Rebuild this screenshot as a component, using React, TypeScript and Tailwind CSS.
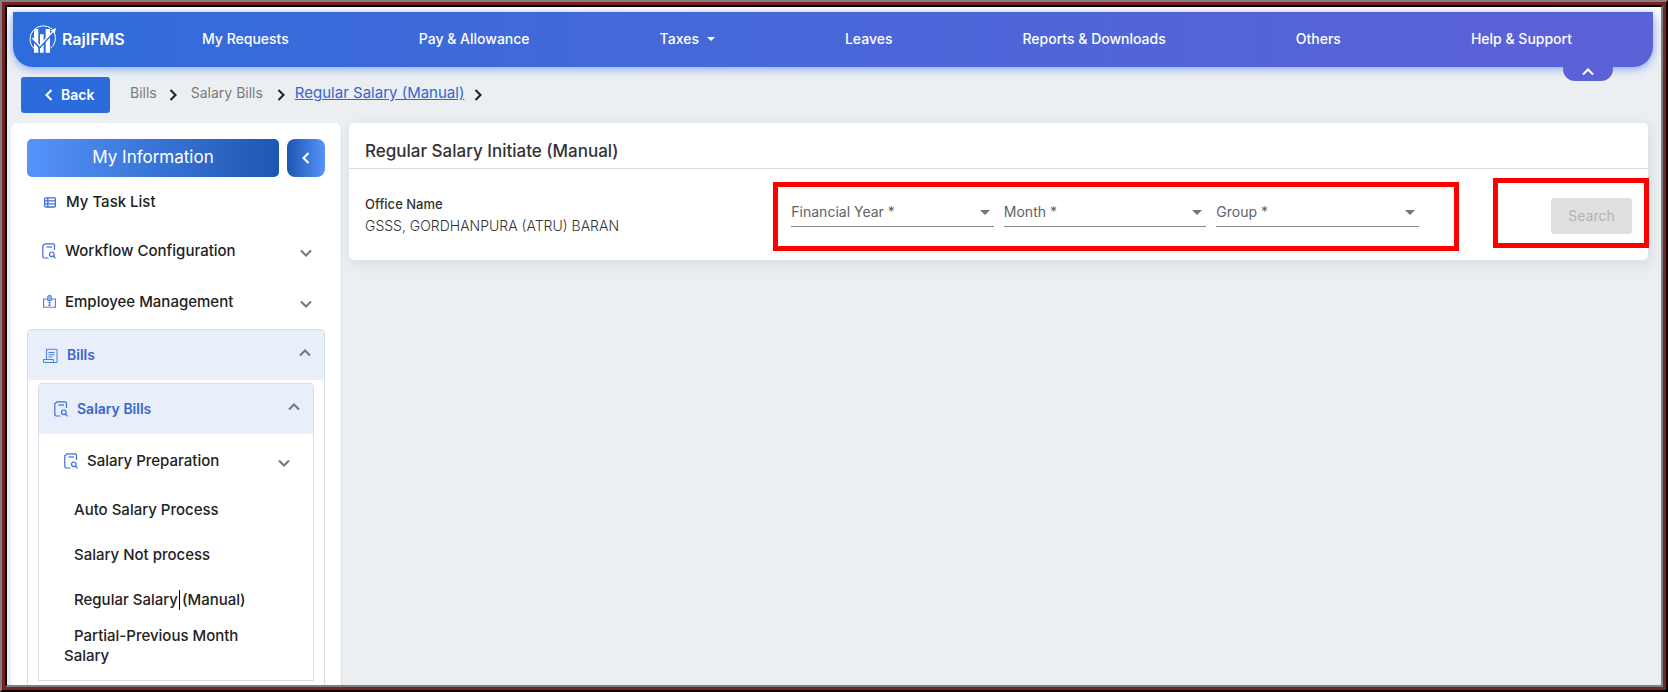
import React, { useState } from 'react';

const NAV_ITEMS = [
  { label: 'My Requests' },
  { label: 'Pay & Allowance' },
  { label: 'Taxes', dropdown: true },
  { label: 'Leaves' },
  { label: 'Reports & Downloads' },
  { label: 'Others' },
  { label: 'Help & Support' },
];

const FIELDS = [
  { id: 'financial-year', label: 'Financial Year *', options: ['2022-23', '2023-24'] },
  { id: 'month', label: 'Month *', options: ['January', 'February', 'March'] },
  { id: 'group', label: 'Group *', options: ['Group A', 'Group B'] },
];

type Direction = 'left' | 'right' | 'up' | 'down';

const CHEVRON_PATHS: Record<Direction, string> = {
  left: 'M8.5 1 3.5 6l5 5',
  right: 'M3.5 1l5 5-5 5',
  up: 'M1 8.500l5-5 5 5',
  down: 'M1 3.500l5 5 5-5',
};

const Chevron: React.FC<{ dir: Direction; className?: string }> = ({ dir, className }) => (
  <svg viewBox="0 0 12 12" fill="none" stroke="currentColor" strokeWidth="2.1" className={`size-3 shrink-0 ${className ?? ''}`}>
    <path d={CHEVRON_PATHS[dir]} />
  </svg>
);

const Logo: React.FC = () => (
  <svg viewBox="0 0 84 87" className="h-[29px] w-7 shrink-0" fill="none">
    <path d="M72 15A40 40 0 1 0 20 76M66 74A40 40 0 0 0 80 28" stroke="#fff" strokeWidth="3" />
    <path d="M18 15h13v71H18zM36 31h11v55H36zM53 15h13v71H53z" fill="#fff" />
    <path d="M13 47 35 70 76 25" stroke="#2f6bd8" strokeWidth="7" />
    <path d="M13 42 35 65 76 21" stroke="#fff" strokeWidth="4" />
    <path d="M84 12 80 30 68 19z" fill="#fff" />
  </svg>
);

const DocSearchIcon: React.FC = () => (
  <svg viewBox="0 0 14 16" className="h-4 w-3.5 shrink-0" fill="none" stroke="#3f6fd8" strokeWidth="1.200">
    <path d="M12.500 7V2.200A1.400 1.400 0 0 0 11.100.8H3L.8 2.800V13.600A1.400 1.400 0 0 0 2.200 15H6.500" />
    <path d="M4.500 4h5.500" />
    <circle cx="9.800" cy="11.300" r="2.300" />
    <path d="m11.500 13 2 2.300" />
  </svg>
);

const ListIcon: React.FC = () => (
  <svg viewBox="0 0 12 11" className="h-[11px] w-3 shrink-0" fill="none" stroke="#3f6fd8" strokeWidth="1.300">
    <rect x=".6" y=".8" width="10.800" height="9.200" rx="1.200" />
    <path d="M.6 3.800h10.800M.6 6.900h10.800M3.800.8V10" />
  </svg>
);

const BadgeIcon: React.FC = () => (
  <svg viewBox="0 0 13 13" className="size-[13px] shrink-0" fill="none" stroke="#4f7fe0" strokeWidth="1.1">
    <path d="M4.800 4H.6v8.200h11.800V4H8.200" />
    <path d="M4.800 5.500V1.700c0-.6.700-1.200 1.700-1.200s1.700.6 1.700 1.200v3.800z" fill="#a9c2f5" />
    <path d="M6.500 6.500v3.800M5 10.300h3M5.300 7.500h2.400" />
  </svg>
);

const ReceiptIcon: React.FC = () => (
  <svg viewBox="0 0 15 15" className="size-[15px] shrink-0" fill="none" stroke="#4f7fe0" strokeWidth="1">
    <path d="M3.500 11.500V1l1.400.7L6.300 1l1.400.7L9.100 1l1.400.7 1.400-.7 1.400.7.7-.7v13.500H.6v-3h9.800v3" />
    <path d="M5.500 4.500h6M5.500 6.700h6M5.500 8.900h4" />
  </svg>
);

interface MenuRowProps {
  icon: React.ReactNode;
  label: string;
  open?: boolean;
  className?: string;
  onClick?: () => void;
}

const MenuRow: React.FC<MenuRowProps> = ({ icon, label, open = false, className = '', onClick }) => (
  <button
    type="button"
    aria-expanded={open}
    onClick={onClick}
    className={`flex w-full items-center text-left leading-5 ${open ? 'text-sm font-semibold text-[#3a66cc]' : 'text-[15px] font-medium text-[#222]'} ${className}`}
  >
    {icon}
    <span className="ml-[9px] flex-1">{label}</span>
    <Chevron dir={open ? 'up' : 'down'} className={open ? 'mb-1 text-[#777]' : 'mt-1 text-[#777]'} />
  </button>
);

const Sidebar: React.FC = () => {
  const [billsOpen, setBillsOpen] = useState(true);
  const [salaryOpen, setSalaryOpen] = useState(true);

  return (
    <aside className="w-[331px] shrink-0 rounded-t-md border-r border-[#dde1e6] bg-white px-4 pt-4">
      <div className="flex gap-2">
        <button type="button" className="h-[38px] flex-1 rounded-[5px] bg-linear-to-r from-[#5594fb] to-[#1d57b3] text-[17px] text-white">
          My Information
        </button>
        <button
          type="button"
          aria-label="Collapse menu"
          className="flex h-[38px] w-[38px] items-center justify-center rounded-lg bg-linear-to-r from-[#1d57b3] to-[#5594fb] text-white"
        >
          <Chevron dir="left" />
        </button>
      </div>

      <a href="#tasks" className="flex h-12 items-center gap-2.5 pt-0.5 pl-[17px] text-[15px] font-medium text-[#222]">
        <ListIcon />
        <span>My Task List</span>
      </a>
      <MenuRow icon={<DocSearchIcon />} label="Workflow Configuration" className="h-[51px] pr-[13px] pl-[15px]" />
      <MenuRow icon={<BadgeIcon />} label="Employee Management" className="mb-0.5 h-[51px] pr-[13px] pl-4" />

      <div className="rounded-t border border-[#d5dfea]">
        <MenuRow
          icon={<ReceiptIcon />}
          label="Bills"
          open={billsOpen}
          onClick={() => setBillsOpen(!billsOpen)}
          className="h-[50px] rounded bg-[#e8eefa] pr-[13px] pl-[15px]"
        />
        {billsOpen && (
          <div className="mx-2.5 mt-[3px] mb-8 rounded-t border border-[#d5dfea]">
            <MenuRow
              icon={<DocSearchIcon />}
              label="Salary Bills"
              open={salaryOpen}
              onClick={() => setSalaryOpen(!salaryOpen)}
              className="h-[50px] bg-[#e8eefa] pr-[13px] pl-[15px]"
            />
            {salaryOpen && (
              <div className="pb-3.5 text-[15px] leading-5 font-medium text-[#222]">
                <MenuRow icon={<DocSearchIcon />} label="Salary Preparation" className="h-[53px] pr-[23px] pl-[25px]" />
                <ul>
                  <li className="flex h-[45px] items-center pl-[35px]">
                    <a href="#auto">Auto Salary Process</a>
                  </li>
                  <li className="flex h-[45px] items-center pl-[35px]">
                    <a href="#not-process">Salary Not process</a>
                  </li>
                  <li className="flex h-[45px] items-center pl-[35px]">
                    <a href="#manual">
                      Regular Salary
                      <span className="relative">
                        <span className="absolute top-0 left-px h-5 w-px bg-black" />
                      </span>{' '}
                      (Manual)
                    </a>
                  </li>
                  <li className="mt-1 pr-12 pl-[25px] indent-2.5">
                    <a href="#partial">Partial-Previous Month Salary</a>
                  </li>
                </ul>
              </div>
            )}
          </div>
        )}
      </div>
    </aside>
  );
};

const Field: React.FC<{ id: string; label: string; options: string[] }> = ({ id, label, options }) => {
  const [value, setValue] = useState('');
  return (
    <div className="relative">
      {!value && (
        <label htmlFor={id} className="pointer-events-none absolute top-1 left-0 text-sm text-[#5f6368]">
          {label}
        </label>
      )}
      <select
        id={id}
        value={value}
        onChange={(e) => setValue(e.target.value)}
        className="block h-[29px] w-full appearance-none border-b border-[#858585] bg-transparent text-sm text-[#444]"
      >
        <option value="" />
        {options.map((o) => (
          <option key={o}>{o}</option>
        ))}
      </select>
      <svg viewBox="0 0 10 5" className="pointer-events-none absolute top-3 right-1 h-[5px] w-2.5 fill-[#757575]">
        <path d="M0 0h10L5 5z" />
      </svg>
    </div>
  );
};

const App: React.FC = () => {
  return (
    <div className="h-screen border-2 border-t-[#808080] border-r-black border-b-black border-l-[#808080] font-['Inter','Noto_Sans',sans-serif]">
      <div className="h-full border-3 border-[#7d2022]">
        <div className="h-full overflow-hidden border-2 border-t-black border-r-[#808080] border-b-[#808080] border-l-black bg-[#ebeff2]">
          <div className="flex h-full flex-col">
            {/* Top navigation */}
            <header className="shrink-0 bg-linear-to-b from-white from-0% to-[#ebeff2] to-40% pt-[5px] pr-2 pl-1.5">
              <nav className="relative flex h-[55px] items-center rounded-b-[20px] bg-linear-to-r from-[#2e6cdb] to-[#5c61d6] pr-4 pb-0.5 pl-[15px] text-white shadow-[0_2px_8px_rgba(60,120,255,0.6)]">
                <a href="#home" className="flex w-[109px] items-center gap-1.5 text-base font-semibold">
                  <Logo />
                  <span>RajIFMS</span>
                </a>
                <ul className="flex flex-1 justify-around text-sm font-medium">
                  {NAV_ITEMS.map((item) => (
                    <li key={item.label}>
                      <a href="#nav" className="flex items-center gap-2 whitespace-nowrap">
                        {item.label}
                        {item.dropdown && (
                          <svg viewBox="0 0 8 4" className="h-1 w-2 fill-white">
                            <path d="M0 0h8L4 4z" />
                          </svg>
                        )}
                      </a>
                    </li>
                  ))}
                </ul>
                <button
                  type="button"
                  aria-label="Hide menu"
                  className="absolute top-full right-10 flex h-3.5 w-[50px] items-center justify-center rounded-b-xl bg-[#5b61d7] pb-1"
                >
                  <Chevron dir="up" />
                </button>
              </nav>
            </header>

            {/* Breadcrumb */}
            <div className="flex shrink-0 items-center pt-2.5 pb-2.5 pl-3.5">
              <button type="button" className="flex h-9 w-[89px] items-center gap-1.5 rounded-[3px] bg-[#2b6bdb] pl-[22px] text-sm font-semibold text-white">
                <Chevron dir="left" />
                Back
              </button>
              <nav className="ml-5 flex items-center text-sm text-[#7b7b7b]" aria-label="Breadcrumb">
                <a href="#bills" className="pb-1">
                  Bills
                </a>
                <Chevron dir="right" className="mr-3 ml-2.5 text-[#222]" />
                <a href="#salary-bills" className="pb-1">
                  Salary Bills
                </a>
                <Chevron dir="right" className="mr-2 ml-3 text-[#222]" />
                <a href="#regular-salary" className="pb-1 text-[15px] text-[#3565cf] underline">
                  Regular Salary (Manual)
                </a>
                <Chevron dir="right" className="ml-2 text-[#222]" />
              </nav>
            </div>

            <div className="flex min-h-0 flex-1 gap-[7px] pr-[13px] pl-1">
              <Sidebar />

              {/* Initiate form */}
              <main className="min-w-0 flex-1">
                <section className="rounded-[5px] bg-white shadow-[2px_4px_14px_rgba(80,90,110,0.14)]">
                  <h1 className="border-b border-[#dcdcdc] px-4 pt-4 pb-[5px] text-[17px] leading-6 font-medium text-[#333]">
                    Regular Salary Initiate (Manual)
                  </h1>
                  <form className="flex items-center px-4 pt-[25px] pb-[22px]" onSubmit={(e) => e.preventDefault()}>
                    <div className="w-1/3 text-[#333]">
                      <p className="text-[13px] leading-5 font-medium">Office Name</p>
                      <p className="text-sm leading-6 font-light">GSSS, GORDHANPURA (ATRU) BARAN</p>
                    </div>
                    <div className="relative mb-2 ml-1 grid w-1/2 grid-cols-3 gap-2.5 pr-1.5">
                      {FIELDS.map((field) => (
                        <Field key={field.id} {...field} />
                      ))}
                      <div className="pointer-events-none absolute -top-4 -right-[34px] -bottom-6 -left-[18px] border-5 border-[#fe0000]" />
                    </div>
                    <div className="relative ml-auto">
                      <button type="submit" disabled className="block h-9 w-[81px] rounded-[3px] bg-[#e0e0e0] text-sm text-[#b3b3b3]">
                        Search
                      </button>
                      <div className="pointer-events-none absolute -top-5 -right-[17px] -bottom-3.5 -left-[58px] border-5 border-[#fe0000]" />
                    </div>
                  </form>
                </section>
              </main>
            </div>
          </div>
        </div>
      </div>
    </div>
  );
};

export default App;
